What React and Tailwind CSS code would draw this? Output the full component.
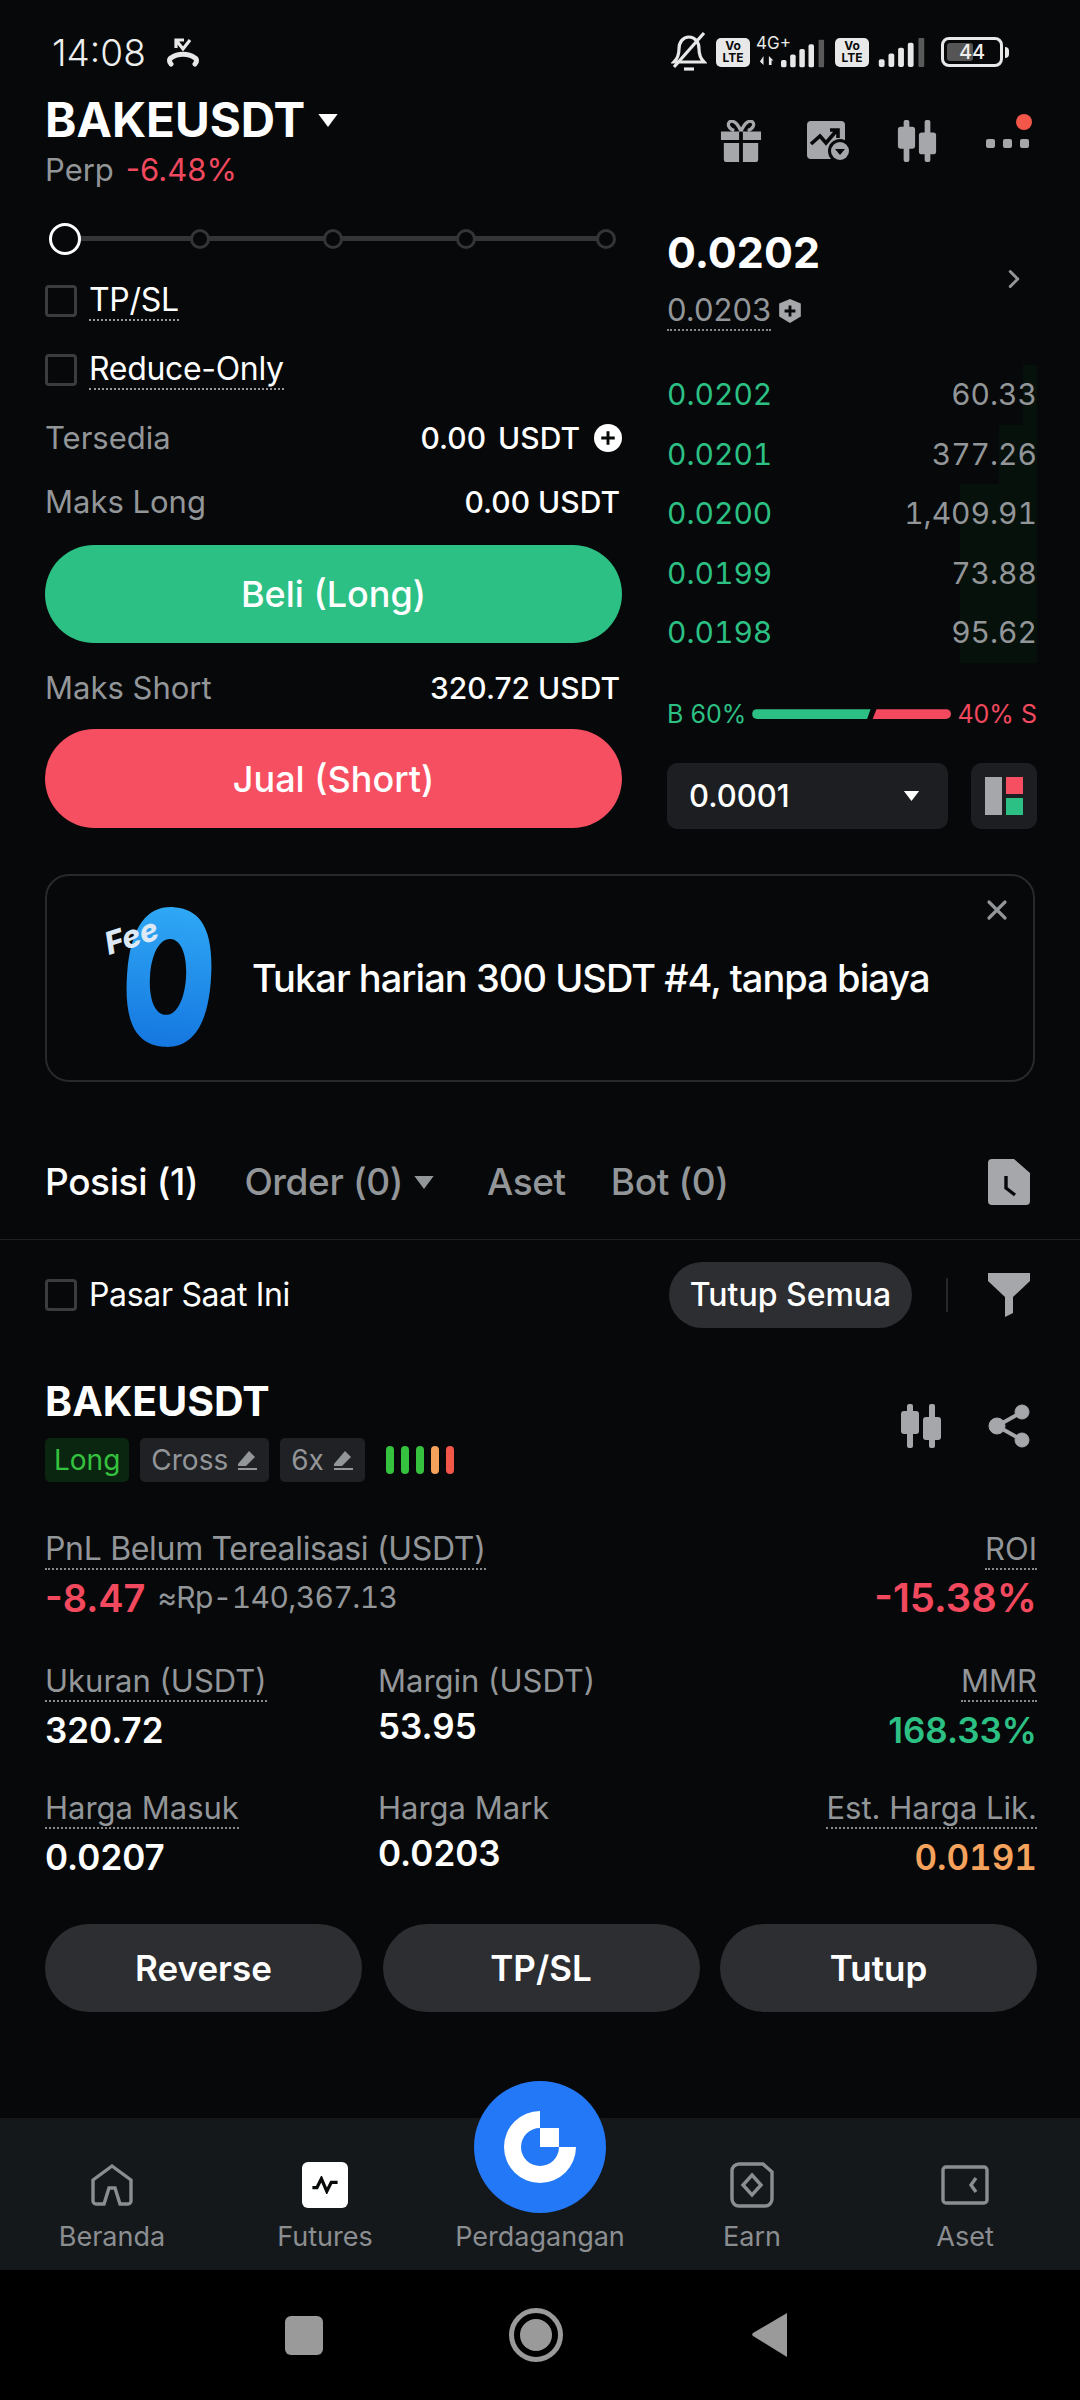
import React from 'react'
import { ChevronRight, X } from 'lucide-react'

const font = { fontFamily: 'Inter, sans-serif' }

function Tri({ className }) {
  return (
    <svg viewBox="0 0 20 14" className={className} fill="currentColor">
      <path d="M1 1h18l-9 12z" />
    </svg>
  )
}

function Candles({ className }) {
  return (
    <svg viewBox="0 0 42 44" className={className} fill="currentColor">
      <rect x="7" y="0" width="6" height="44" rx="2" />
      <rect x="29" y="0" width="6" height="44" rx="2" />
      <rect x="1" y="7" width="18" height="23" rx="3" />
      <rect x="23" y="13" width="18" height="23" rx="3" />
    </svg>
  )
}

function Check({ label, dotted, className = '' }) {
  return (
    <div className={`flex items-center gap-[12px] ${className}`}>
      <div className="w-[32px] h-[32px] rounded-[4px] border-[3px] border-[#3a3d40]" />
      <span className={`text-[32px] leading-[38px] tracking-[-0.01em] text-white ${dotted ? 'border-b-2 border-dotted border-[#9a9a9a]' : ''}`}>{label}</span>
    </div>
  )
}

function Row({ label, value, plus }) {
  return (
    <div className="flex items-center justify-between h-[40px]">
      <span className="text-[31px] text-[#939699]">{label}</span>
      <span className="flex items-center text-[30px] font-medium text-white">
        {value}
        {plus && (
          <span className="ml-[14px] w-[28px] h-[28px] rounded-full bg-white flex items-center justify-center">
            <svg viewBox="0 0 16 16" className="w-[18px] h-[18px]" stroke="#060809" strokeWidth="2.6"><path d="M8 2v12M2 8h12" /></svg>
          </span>
        )}
      </span>
    </div>
  )
}

function Stat({ label, value, color = 'text-white', align = 'left', dotted = true, width, gap = 'mt-[7px]', size = 'text-[35px]' }) {
  return (
    <div className={`flex flex-col ${align === 'right' ? 'items-end' : 'items-start'} ${width || ''}`}>
      <span className={`text-[31px] leading-[38px] text-[#939699] ${dotted ? 'border-b-2 border-dotted border-[#8a8a8a]' : ''}`}>{label}</span>
      <span className={`${gap} ${size} leading-[42px] font-semibold ${color}`}>{value}</span>
    </div>
  )
}

function Pencil() {
  return (
    <svg viewBox="0 0 22 22" className="w-[22px] h-[22px]" fill="currentColor">
      <path d="M13 2l6 6-9 9H2v-2z" />
      <path d="M2 19h19v2H2z" />
    </svg>
  )
}

function VoLte() {
  return (
    <div className="w-[34px] h-[29px] bg-[#e8e8e8] rounded-[5px] flex flex-col items-center justify-center text-[#060809] text-[12px] leading-[12px] font-bold">
      <span>Vo</span>
      <span>LTE</span>
    </div>
  )
}

function Bars({ className }) {
  return (
    <svg viewBox="0 0 48 30" className={className} fill="#e8e8e8">
      <rect x="0" y="22" width="6" height="8" rx="2" />
      <rect x="10" y="16" width="6" height="14" rx="2" />
      <rect x="20" y="10" width="6" height="20" rx="2" />
      <rect x="30" y="5" width="6" height="25" rx="2" />
      <rect x="41" y="0" width="6" height="30" rx="1" fill="#5a5a5a" />
    </svg>
  )
}

function StatusBar() {
  return (
    <div className="h-[85px] pt-[19px] pl-[52px] pr-[71px] flex items-center justify-between">
      <div className="flex items-center gap-[20px]">
        <span className="text-[37px] font-light text-[#eeeeee] leading-none">14:08</span>
        <svg viewBox="0 0 34 30" className="w-[34px] h-[30px]" fill="none" stroke="#e8e8e8" strokeWidth="3.2">
          <path d="M10 11V3h8M10 3l7 9 7-9" />
          <path d="M5 27c-2-2-2-5 0-6 7-5 17-5 24 0 2 1 2 4 0 6" strokeWidth="5" strokeLinecap="round" />
        </svg>
      </div>
      <div className="flex items-center">
        <svg viewBox="0 0 36 42" className="w-[36px] h-[42px] mr-[9px]" fill="none" stroke="#e8e8e8" strokeWidth="3.2">
          <path d="M3 31c3-3 5-6 5-13 0-7 4-12 10-12s10 5 10 12c0 7 2 10 5 13z" />
          <path d="M13 38h10" />
          <path d="M33 2L3 36" />
        </svg>
        <VoLte />
        <div className="relative w-[69px] h-[31px] ml-[6px]">
          <span className="absolute left-0 top-[-3px] text-[17px] leading-[18px] text-[#e8e8e8]">4G+</span>
          <svg viewBox="0 0 20 12" className="absolute left-[3px] bottom-[2px] w-[18px] h-[11px]" fill="#e8e8e8">
            <path d="M1 7l4-6v10zM11 1l5 5-2 0v5h-3z" />
          </svg>
          <Bars className="absolute right-0 bottom-0 w-[44px] h-[29px]" />
        </div>
        <div className="ml-[10px]"><VoLte /></div>
        <Bars className="ml-[9px] w-[48px] h-[29px]" />
        <div className="ml-[15px] flex items-center">
          <div className="w-[62px] h-[30px] rounded-[8px] border-[3px] border-[#e8e8e8] p-[3px] relative">
            <div className="w-[26px] h-full bg-[#555] rounded-[3px]" />
            <span className="absolute inset-0 flex items-center justify-center text-[20px] font-medium text-[#eeeeee]">44</span>
          </div>
          <div className="w-[4px] h-[11px] ml-[2px] bg-[#e8e8e8] rounded-r" />
        </div>
      </div>
    </div>
  )
}

function Header() {
  return (
    <div className="h-[115px] pl-[45px] pr-[48px] pt-[10px] flex justify-between">
      <div>
        <div className="flex items-center gap-[12px]">
          <span className="text-[47.5px] leading-[50px] font-bold text-white">BAKEUSDT</span>
          <Tri className="w-[22px] h-[15px] text-white" />
        </div>
        <div className="mt-[6px] text-[31px] leading-[38px]">
          <span className="text-[#939699]">Perp</span>
          <span className="ml-[12px] text-[#f2495e]">-6.48%</span>
        </div>
      </div>
      <div className="flex items-center gap-[45px] h-[80px] pt-[12px]">
        <svg viewBox="0 0 42 44" className="w-[42px] h-[42px]" fill="#a5a7aa">
          <path d="M0 12h19v9H0zM23 12h19v9H23zM3 24h16v20H6a3 3 0 0 1-3-3zM23 24h16v17a3 3 0 0 1-3 3H23z" />
          <path d="M21 12C17 2 12 0 9 2c-3 3 0 8 5 9M21 12c4-10 9-12 12-10 3 3 0 8-5 9" fill="none" stroke="#a5a7aa" strokeWidth="3.4" />
        </svg>
        <svg viewBox="0 0 44 42" className="w-[44px] h-[42px]">
          <rect x="0" y="1" width="38" height="38" rx="4" fill="#a5a7aa" />
          <path d="M4 24l9-8 6 7 11-13M23 10h8v8" fill="none" stroke="#060809" strokeWidth="3.6" />
          <circle cx="33" cy="31" r="12" fill="#060809" />
          <circle cx="33" cy="31" r="9" fill="#a5a7aa" />
          <path d="M28 29h10l-5 6z" fill="#060809" />
        </svg>
        <Candles className="w-[42px] h-[42px] text-[#a5a7aa]" />
        <div className="relative ml-[3px] w-[46px] h-[44px]">
          <div className="absolute left-0 right-[3px] top-[20px] flex justify-between">
            <span className="w-[9px] h-[9px] rounded-[2px] bg-[#a5a7aa]" />
            <span className="w-[9px] h-[9px] rounded-[2px] bg-[#a5a7aa]" />
            <span className="w-[9px] h-[9px] rounded-[2px] bg-[#a5a7aa]" />
          </div>
          <span className="absolute right-0 top-[-5px] w-[16px] h-[16px] rounded-full bg-[#f2574a]" />
        </div>
      </div>
    </div>
  )
}

function Slider() {
  return (
    <div className="relative h-[36px] flex items-center pl-[4px]">
      <div className="absolute left-[20px] w-[540px] top-[15px] h-[5px] bg-[#333537]" />
      <span className="relative w-[32px] h-[32px] rounded-full border-[3px] border-white bg-[#060809]" />
      <span className="relative ml-[109px] w-[20px] h-[20px] rounded-full border-[3px] border-[#333537] bg-[#060809]" />
      <span className="relative ml-[113px] w-[20px] h-[20px] rounded-full border-[3px] border-[#333537] bg-[#060809]" />
      <span className="relative ml-[113px] w-[20px] h-[20px] rounded-full border-[3px] border-[#333537] bg-[#060809]" />
      <span className="relative ml-[120px] w-[20px] h-[20px] rounded-full border-[3px] border-[#333537] bg-[#060809]" />
    </div>
  )
}

function OrderForm() {
  return (
    <div className="w-[577px] flex flex-col">
      <div className="h-[21px]" />
      <Slider />
      <Check label="TP/SL" dotted className="mt-[24px]" />
      <Check label="Reduce-Only" dotted className="mt-[29px]" />
      <div className="mt-[28px]"><Row label="Tersedia" value={<span className="flex gap-[12px]"><span>0.00</span><span>USDT</span></span>} plus /></div>
      <div className="mt-[24px] pr-[2px]"><Row label="Maks Long" value="0.00 USDT" /></div>
      <button className="mt-[23px] h-[98px] rounded-full bg-[#2cc084] text-white text-[36px] font-medium">Beli (Long)</button>
      <div className="mt-[25px] pr-[2px]"><Row label="Maks Short" value="320.72 USDT" /></div>
      <button className="mt-[21px] h-[99px] rounded-full bg-[#f74f62] text-white text-[36px] font-medium">Jual (Short)</button>
    </div>
  )
}

const book = [
  ['0.0202', '60.33', 'w-[14px]'],
  ['0.0201', '377.26', 'w-[38px]'],
  ['0.0200', '1,409.91', 'w-[77px]'],
  ['0.0199', '73.88', 'w-[77px]'],
  ['0.0198', '95.62', 'w-[77px]'],
]

function OrderBook() {
  return (
    <div className="w-[370px] flex flex-col pt-[27px]">
      <div className="flex items-center justify-between pr-[8px]">
        <div>
          <div className="text-[43px] leading-[50px] font-bold text-white">0.0202</div>
          <div className="mt-[14px] flex items-center gap-[6px]">
            <span className="text-[31px] leading-[38px] text-[#939699] border-b-2 border-dotted border-[#8a8a8a]">0.0203</span>
            <svg viewBox="0 0 24 24" className="w-[26px] h-[26px]">
              <path d="M12 1l10 4v12l-10 6-10-6V5z" fill="#a5a7aa" />
              <path d="M12 7v10M7 12h10" stroke="#060809" strokeWidth="2.6" />
            </svg>
          </div>
        </div>
        <ChevronRight className="w-[30px] h-[30px] text-[#939699]" strokeWidth={2.4} />
      </div>
      <div className="mt-[34px] flex flex-col">
        {book.map(([p, q, w]) => (
          <div key={p} className="relative h-[59.5px] flex items-center justify-between text-[30px] tabular-nums">
            <div className={`absolute right-0 top-0 bottom-0 bg-[#07110c] ${w}`} />
            <span className="relative text-[#2cc084]">{p}</span>
            <span className="relative text-[#939699]">{q}</span>
          </div>
        ))}
      </div>
      <div className="mt-[33px] flex items-center justify-between text-[25px]">
        <span className="text-[#2cc084]">B 60%</span>
        <div className="flex-1 mx-[6px] flex gap-[2px]">
          <div className="h-[10px] flex-[60] rounded-l-full bg-[#2cc084] [clip-path:polygon(0_0,100%_0,97%_100%,0_100%)]" />
          <div className="h-[10px] flex-[40] rounded-r-full bg-[#f2495e] [clip-path:polygon(5%_0,100%_0,100%_100%,0_100%)]" />
        </div>
        <span className="text-[#f2495e]">40% S</span>
      </div>
      <div className="mt-[30px] flex justify-between">
        <div className="w-[281px] h-[66px] rounded-[10px] bg-[#1c1e21] pl-[22px] pr-[28px] flex items-center justify-between">
          <span className="text-[31px] font-medium text-white">0.0001</span>
          <Tri className="w-[17px] h-[12px] text-white" />
        </div>
        <div className="w-[66px] h-[66px] rounded-[10px] bg-[#1c1e21] flex items-center justify-center">
          <div className="flex gap-[4px]">
            <div className="w-[17px] h-[38px] bg-[#a5a7aa]" />
            <div className="flex flex-col gap-[4px]">
              <div className="w-[17px] h-[17px] bg-[#f74f62]" />
              <div className="w-[17px] h-[17px] bg-[#2cc084]" />
            </div>
          </div>
        </div>
      </div>
    </div>
  )
}

function Banner() {
  return (
    <div className="relative mx-[45px] mt-[45px] h-[208px] rounded-[24px] border-2 border-[#27292b] flex items-center">
      <svg viewBox="0 0 110 145" className="w-[110px] h-[145px] ml-[58px] mt-[-2px] overflow-visible">
        <defs>
          <linearGradient id="fee" x1="0" y1="0" x2="0" y2="1">
            <stop offset="0" stopColor="#2fa8f5" />
            <stop offset="1" stopColor="#1577e0" />
          </linearGradient>
        </defs>
        <g transform="rotate(4 64 72)">
          <path
            fillRule="evenodd"
            d="M22 72C22 20 40 2 64 2c26 0 42 18 42 70s-18 70-42 70c-26 0-42-18-42-70zM45 72c0 22 7 38 18 38s18-16 18-38-7-38-18-38-18 16-18 38z"
            fill="url(#fee)"
          />
        </g>
        <text x="4" y="50" transform="rotate(-18 4 50)" fontFamily="Inter, sans-serif" fontStyle="italic" fontWeight="800" fontSize="31" fill="#dce9f5">Fee</text>
      </svg>
      <span className="ml-[37px] text-[38px] tracking-[-0.025em] font-medium text-white">Tukar harian 300 USDT #4, tanpa biaya</span>
      <X className="absolute right-[20px] top-[18px] w-[32px] h-[32px] text-[#939699]" strokeWidth={2.4} />
    </div>
  )
}

function Tabs() {
  return (
    <div className="mt-[77px] h-[81px] border-b border-[#1e2022] pl-[45px] pr-[50px] flex items-start justify-between">
      <div className="flex items-center text-[37px] leading-[46px] font-medium tracking-[-0.01em] text-[#939699]">
        <span className="text-white">Posisi (1)</span>
        <span className="ml-[46px]">Order (0)</span>
        <Tri className="ml-[10px] w-[22px] h-[15px]" />
        <span className="ml-[52px]">Aset</span>
        <span className="ml-[45px]">Bot (0)</span>
      </div>
      <svg viewBox="0 0 42 46" className="w-[42px] h-[46px]" fill="#a5a7aa">
        <path d="M4 0h22l16 14v28a4 4 0 0 1-4 4H4a4 4 0 0 1-4-4V4a4 4 0 0 1 4-4z" />
        <path d="M18 17v12l9 7" fill="none" stroke="#060809" strokeWidth="3.4" />
      </svg>
    </div>
  )
}

function Filters() {
  return (
    <div className="h-[88px] mt-[11px] pl-[45px] pr-[50px] flex items-center justify-between">
      <Check label="Pasar Saat Ini" />
      <div className="flex items-center">
        <div className="w-[243px] h-[66px] rounded-full bg-[#2c2e31] flex items-center justify-center text-[32px] font-medium text-white">Tutup Semua</div>
        <div className="w-[2px] h-[34px] bg-[#26282a] ml-[34px] mr-[40px]" />
        <svg viewBox="0 0 42 44" className="w-[42px] h-[44px]" fill="#a5a7aa">
          <path d="M0 0h42v8L25 24v16l-8 4V24L0 8z" />
        </svg>
      </div>
    </div>
  )
}

function Position() {
  return (
    <div className="mt-[39px] pl-[45px] pr-[43px] flex flex-col">
      <div className="flex justify-between items-center pr-[7px]">
        <div>
          <div className="text-[41px] leading-[46px] font-bold text-white">BAKEUSDT</div>
          <div className="mt-[14px] flex items-center text-[28px]">
            <span className="h-[44px] px-[9px] rounded-[5px] bg-[#0a2510] text-[#35c23f] flex items-center">Long</span>
            <span className="ml-[11px] h-[44px] px-[11px] rounded-[5px] bg-[#1f2124] text-[#939699] flex items-center gap-[8px]">Cross<Pencil /></span>
            <span className="ml-[11px] h-[44px] px-[11px] rounded-[5px] bg-[#1f2124] text-[#939699] flex items-center gap-[8px]">6x<Pencil /></span>
            <div className="ml-[21px] flex gap-[7px]">
              <span className="w-[8px] h-[28px] rounded-full bg-[#35c23f]" />
              <span className="w-[8px] h-[28px] rounded-full bg-[#35c23f]" />
              <span className="w-[8px] h-[28px] rounded-full bg-[#35c23f]" />
              <span className="w-[8px] h-[28px] rounded-full bg-[#f5a25d]" />
              <span className="w-[8px] h-[28px] rounded-full bg-[#f2574a]" />
            </div>
          </div>
        </div>
        <div className="flex items-center gap-[46px] mt-[-8px]">
          <Candles className="w-[42px] h-[44px] text-[#a5a7aa]" />
          <svg viewBox="0 0 42 44" className="w-[42px] h-[44px]" fill="#a5a7aa" stroke="#a5a7aa">
            <circle cx="34" cy="8" r="7" />
            <circle cx="9" cy="22" r="8" />
            <circle cx="34" cy="36" r="7" />
            <path d="M34 8L9 22l25 14" fill="none" strokeWidth="4" />
          </svg>
        </div>
      </div>

      <div className="mt-[48px] flex justify-between">
        <div>
          <span className="text-[32px] leading-[38px] tracking-[-0.01em] text-[#939699] border-b-2 border-dotted border-[#8a8a8a]">PnL Belum Terealisasi (USDT)</span>
          <div className="mt-[7px] flex items-center">
            <span className="text-[38px] leading-[44px] font-semibold text-[#f2495e]">-8.47</span>
            <span className="ml-[12px] text-[30px] tabular-nums tracking-[-0.02em] text-[#939699]">≈Rp-140,367.13</span>
          </div>
        </div>
        <Stat label="ROI" value="-15.38%" color="text-[#f2495e]" align="right" gap="mt-[7px]" size="text-[40px]" />
      </div>

      <div className="mt-[42px] flex">
        <Stat label="Ukuran (USDT)" value="320.72" width="w-[333px]" />
        <Stat label="Margin (USDT)" value="53.95" dotted={false} gap="mt-[5px]" />
        <div className="flex-1 flex justify-end">
          <Stat label="MMR" value="168.33%" color="text-[#2cc084]" align="right" />
        </div>
      </div>

      <div className="mt-[38px] flex">
        <Stat label="Harga Masuk" value="0.0207" width="w-[333px]" />
        <Stat label="Harga Mark" value="0.0203" dotted={false} gap="mt-[5px]" />
        <div className="flex-1 flex justify-end">
          <Stat label="Est. Harga Lik." value={<span className="tabular-nums">0.0191</span>} color="text-[#f5a25d]" align="right" />
        </div>
      </div>

      <div className="mt-[46px] flex justify-between">
        {['Reverse', 'TP/SL', 'Tutup'].map(b => (
          <button key={b} className="w-[317px] h-[88px] rounded-full bg-[#2c2e31] text-[35px] font-semibold text-white">{b}</button>
        ))}
      </div>
    </div>
  )
}

function NavItem({ label, width, children }) {
  return (
    <div className={`${width} flex flex-col items-center`}>
      <div className="h-[48px] flex items-center justify-center">{children}</div>
      <span className="mt-[11px] text-[27px] leading-[34px] text-[#8b8e91]">{label}</span>
    </div>
  )
}

function BottomNav() {
  return (
    <div className="relative h-[152px] bg-[#15181b] flex pt-[43px]">
      <div className="absolute left-[474px] top-[-37px] w-[132px] h-[132px] rounded-full bg-[#2378f7] flex items-center justify-center">
        <svg viewBox="0 0 72 72" className="w-[72px] h-[72px]" fill="#ffffff">
          <path d="M36 0A36 36 0 1 0 72 36H55A19 19 0 1 1 36 17Z" />
          <rect x="36" y="17" width="19" height="19" />
        </svg>
      </div>
      <NavItem label="Beranda" width="w-[224px]">
        <svg viewBox="0 0 44 44" className="w-[44px] h-[44px]" fill="none" stroke="#8b8e91" strokeWidth="3.4">
          <path d="M22 3L3 17v21a3 3 0 0 0 3 3h8l5-16h6l5 16h8a3 3 0 0 0 3-3V17z" />
        </svg>
      </NavItem>
      <NavItem label="Futures" width="w-[202px]">
        <div className="w-[46px] h-[46px] rounded-[6px] bg-white flex items-center justify-center">
          <svg viewBox="0 0 30 20" className="w-[28px] h-[18px]" fill="none" stroke="#060809" strokeWidth="3.6">
            <path d="M1 13h5l5-10 6 14 5-10h7" />
          </svg>
        </div>
      </NavItem>
      <NavItem label="Perdagangan" width="w-[228px]" />
      <NavItem label="Earn" width="w-[196px]">
        <svg viewBox="0 0 44 46" className="w-[44px] h-[46px]" fill="none" stroke="#8b8e91" strokeWidth="3.4">
          <path d="M9 2h24l9 8v27a7 7 0 0 1-7 7H9a7 7 0 0 1-7-7V9a7 7 0 0 1 7-7z" />
          <path d="M22 13l9 10-9 10-9-10z" />
        </svg>
      </NavItem>
      <NavItem label="Aset" width="w-[230px]">
        <svg viewBox="0 0 48 40" className="w-[48px] h-[40px]" fill="none" stroke="#8b8e91" strokeWidth="3.4">
          <rect x="2" y="2" width="44" height="36" rx="3" />
          <path d="M35 13l-5 7 5 7" />
        </svg>
      </NavItem>
    </div>
  )
}

function SystemNav() {
  return (
    <div className="h-[130px] bg-black flex items-center">
      <div className="w-[540px] flex justify-between pl-[285px] items-center">
        <div className="w-[38px] h-[39px] rounded-[6px] bg-[#9a9a9a]" />
        <div className="w-[54px] h-[54px] rounded-full border-[5px] border-[#9a9a9a] flex items-center justify-center mr-[-23px]">
          <div className="w-[32px] h-[32px] rounded-full bg-[#9a9a9a]" />
        </div>
      </div>
      <svg viewBox="0 0 36 46" className="w-[36px] h-[46px] ml-[211px]" fill="#9a9a9a">
        <path d="M36 1v44L2 24a2 2 0 0 1 0-3z" />
      </svg>
    </div>
  )
}

export default function App() {
  return (
    <div className="w-[1080px] h-[2400px] bg-[#060809] flex flex-col overflow-hidden" style={font}>
      <StatusBar />
      <Header />
      <div className="pl-[45px] pr-[43px] flex justify-between items-start">
        <OrderForm />
        <OrderBook />
      </div>
      <Banner />
      <Tabs />
      <Filters />
      <Position />
      <div className="flex-1" />
      <BottomNav />
      <SystemNav />
    </div>
  )
}
